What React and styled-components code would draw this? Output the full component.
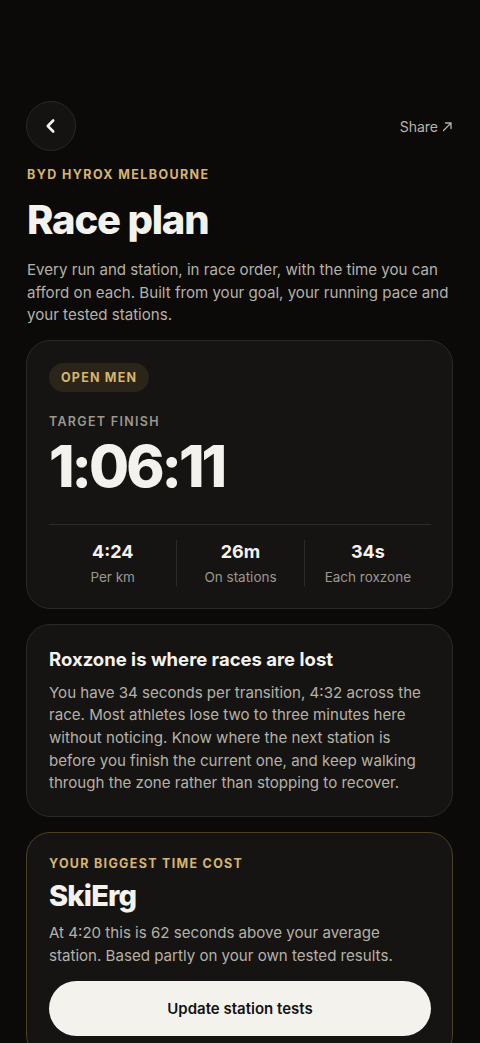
import React from "react";
import styled, { createGlobalStyle } from "styled-components";

const Global = createGlobalStyle`
  html, body {
    margin: 0;
    padding: 0;
    background: #0b0a09;
  }
  body {
    font-family: Inter, "Noto Sans", sans-serif;
    -webkit-font-smoothing: antialiased;
  }
`;

const Page = styled.div`
  width: 480px;
  min-height: 1043px;
  box-sizing: border-box;
  padding: 101px 27px 40px 26px;
  background: #0b0a09;
  color: #f4f2ed;
`;

const TopBar = styled.div`
  display: flex;
  align-items: center;
  justify-content: space-between;
`;

const BackButton = styled.button`
  width: 50px;
  height: 50px;
  border-radius: 50%;
  background: #141311;
  border: 1px solid #2a2826;
  display: flex;
  align-items: center;
  justify-content: center;
  padding: 0;
  color: #f4f2ed;
`;

const ShareLink = styled.span`
  font-size: 14px;
  color: #b9b4ab;
  display: flex;
  align-items: center;
  gap: 4px;
`;

const Eyebrow = styled.div`
  margin-top: 16px;
  padding-left: 1px;
  font-size: 12.5px;
  font-weight: 700;
  letter-spacing: 1.4px;
  color: #d7b56c;
  text-transform: uppercase;
`;

const Title = styled.h1`
  margin: 14px 0 0 1px;
  font-size: 40px;
  line-height: 48px;
  font-weight: 800;
  letter-spacing: -1.2px;
  color: #f4f2ed;
`;

const Intro = styled.p`
  margin: 15px 0 0 1px;
  font-size: 15.1px;
  line-height: 22.5px;
  color: #b6b1a8;
`;

const Card = styled.section`
  margin-top: ${p => p.$gap || 16}px;
  background: #151412;
  border: 1px solid ${p => p.$gold ? "#4b3f24" : "#2b2927"};
  border-radius: 24px;
  padding: ${p => p.$pad || "22px 21px 22px 22px"};
`;

const Pill = styled.span`
  display: inline-block;
  background: #2a2419;
  color: #d7b56c;
  font-size: 12.5px;
  font-weight: 700;
  letter-spacing: 1.2px;
  padding: 7px 12px;
  border-radius: 16px;
`;

const Label = styled.div`
  margin-top: ${p => p.$top || 0}px;
  font-size: 12.5px;
  font-weight: ${p => p.$gold ? 700 : 600};
  letter-spacing: 1.3px;
  color: ${p => p.$gold ? "#d7b56c" : "#9c978f"};
`;

const BigTime = styled.div`
  margin-top: 6px;
  font-size: 58px;
  line-height: 62px;
  font-weight: 800;
  letter-spacing: -3px;
  color: #f4f2ed;
`;

const Stats = styled.div`
  margin-top: 27px;
  border-top: 1px solid #2d2b28;
  padding-top: 15px;
  display: grid;
  grid-template-columns: repeat(3, 1fr);
`;

const Stat = styled.div`
  display: flex;
  flex-direction: column;
  align-items: center;
  border-left: ${p => p.$first ? "none" : "1px solid #2d2b28"};
  padding: 1px 0 0 0;
`;

const StatValue = styled.div`
  font-size: 18px;
  font-weight: 700;
  line-height: 22px;
  color: #f4f2ed;
`;

const StatLabel = styled.div`
  margin-top: 5px;
  font-size: 13.5px;
  line-height: 18px;
  color: #9c978f;
`;

const CardTitle = styled.h2`
  margin: 0;
  font-size: 18.5px;
  line-height: 24px;
  font-weight: 700;
  color: #f4f2ed;
`;

const Body = styled.p`
  margin: ${p => p.$top || 8}px 0 0 0;
  font-size: 15.1px;
  line-height: 22.7px;
  color: #b6b1a8;
`;

const Heading = styled.div`
  margin-top: 7px;
  font-size: 29px;
  line-height: 36px;
  font-weight: 800;
  letter-spacing: -0.8px;
  color: #f4f2ed;
`;

const PrimaryButton = styled.button`
  margin-top: 14px;
  width: 100%;
  height: 55px;
  border: none;
  border-radius: 28px;
  background: #f4f2ed;
  color: #141210;
  font-family: inherit;
  font-size: 15px;
  font-weight: 600;
`;

const stats = [
  { value: "4:24", label: "Per km" },
  { value: "26m", label: "On stations" },
  { value: "34s", label: "Each roxzone" },
];

export default function App() {
  return (
    <Page>
      <Global />
      <TopBar>
        <BackButton aria-label="Back">
          <svg width="16" height="16" viewBox="0 0 16 16" fill="none">
            <path d="M10.2 2.5 L4.8 8 L10.2 13.5" stroke="#f4f2ed" strokeWidth="2.6" strokeLinecap="round" strokeLinejoin="round" />
          </svg>
        </BackButton>
        <ShareLink>
          Share
          <svg width="11" height="11" viewBox="0 0 11 11" fill="none">
            <path d="M1.5 9.5 L9 2 M3.5 2 H9 V7.5" stroke="#b9b4ab" strokeWidth="1.3" strokeLinecap="round" />
          </svg>
        </ShareLink>
      </TopBar>

      <Eyebrow>BYD HYROX MELBOURNE</Eyebrow>
      <Title>Race plan</Title>
      <Intro>
        Every run and station, in race order, with the time you can afford on each. Built from your goal, your running pace and your tested stations.
      </Intro>

      <Card $gap={13} $pad="22px 21px 22px 22px">
        <Pill>OPEN MEN</Pill>
        <Label $top={22}>TARGET FINISH</Label>
        <BigTime>1:06:11</BigTime>
        <Stats>
          {stats.map((s, i) => (
            <Stat key={s.label} $first={i === 0}>
              <StatValue>{s.value}</StatValue>
              <StatLabel>{s.label}</StatLabel>
            </Stat>
          ))}
        </Stats>
      </Card>

      <Card $gap={15} $pad="22px 21px 21px 22px">
        <CardTitle>Roxzone is where races are lost</CardTitle>
        <Body $top={11}>
          You have 34 seconds per transition, 4:32 across the race. Most athletes lose two to three minutes here without noticing. Know where the next station is before you finish the current one, and keep walking through the zone rather than stopping to recover.
        </Body>
      </Card>

      <Card $gold $gap={15} $pad="23px 21px 22px 22px">
        <Label $gold $top={0}>YOUR BIGGEST TIME COST</Label>
        <Heading>SkiErg</Heading>
        <Body $top={8}>
          At 4:20 this is 62 seconds above your average station. Based partly on your own tested results.
        </Body>
        <PrimaryButton>Update station tests</PrimaryButton>
      </Card>
    </Page>
  );
}
